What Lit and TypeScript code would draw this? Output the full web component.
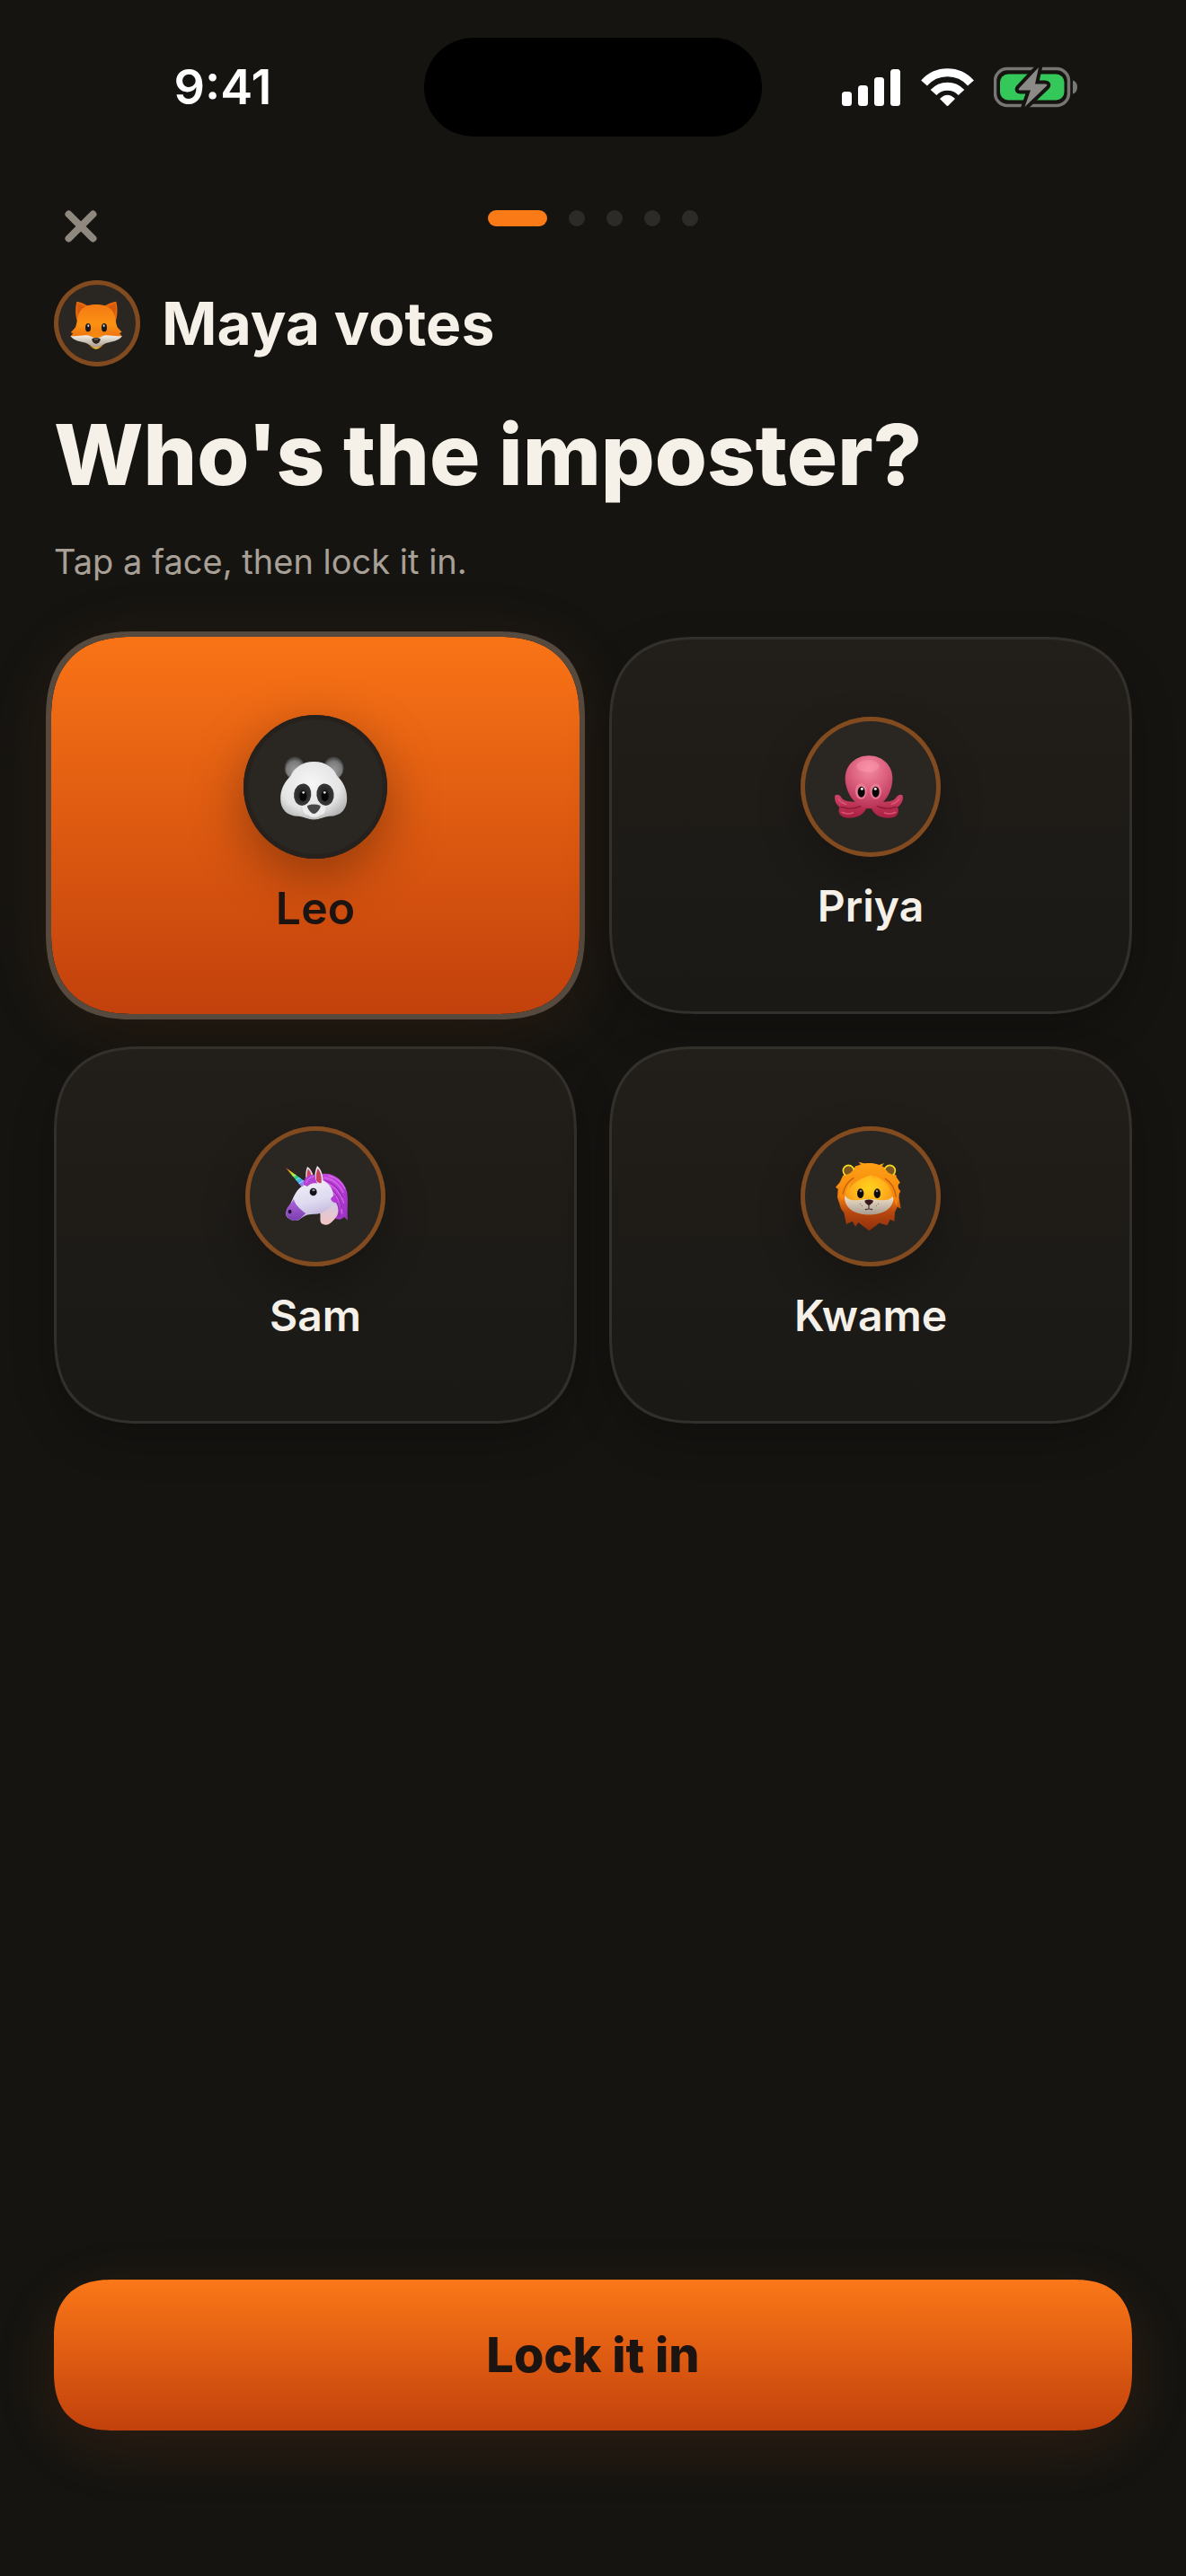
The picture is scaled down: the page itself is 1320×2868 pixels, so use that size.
import { LitElement, html, svg, css } from "lit";
import { customElement, property, state } from "lit/decorators.js";
import { classMap } from "lit/directives/class-map.js";

type Animal = "fox" | "panda" | "octopus" | "unicorn" | "lion";

interface Player {
  name: string;
  animal: Animal;
}

const PLAYERS: Player[] = [
  { name: "Leo", animal: "panda" },
  { name: "Priya", animal: "octopus" },
  { name: "Sam", animal: "unicorn" },
  { name: "Kwame", animal: "lion" },
];

const fox = html`<svg viewBox="30 36 288 288" aria-hidden="true">
  <defs>
    <linearGradient id="f1" x1="0" y1="0" x2="0" y2="1">
      <stop offset="0" stop-color="#f57a12" />
      <stop offset=".55" stop-color="#fb9113" />
      <stop offset="1" stop-color="#e9690f" />
    </linearGradient>
    <radialGradient id="f2" cx=".5" cy="1" r=".7">
      <stop offset="0" stop-color="#ffc62a" />
      <stop offset="1" stop-color="#ff9a14" stop-opacity="0" />
    </radialGradient>
    <linearGradient id="f3" x1="0" y1="0" x2="0" y2="1">
      <stop offset="0" stop-color="#f3ede4" />
      <stop offset="1" stop-color="#a79b8c" />
    </linearGradient>
  </defs>
  <path d="M106 107 C100 130 102 156 108 174 L150 126 C136 116 118 108 106 107Z" fill="#e5680f" />
  <path d="M238 107 C244 130 242 156 236 174 L192 126 C206 116 226 108 238 107Z" fill="#e5680f" />
  <path d="M110 113 C108 128 108 140 112 152 L138 126Z" fill="#d65a0d" />
  <path d="M235 113 C237 128 237 140 232 152 L206 126Z" fill="#d65a0d" />
  <path
    d="M171 117 C146 117 124 124 114 146 C106 166 108 182 100 196 L86 211 L94 213 L86 223 C100 232 140 244 171 236 C204 244 244 232 257 223 L249 213 L257 209 L244 196 C235 180 238 164 230 146 C220 124 196 117 171 117Z"
    fill="url(#f1)"
  />
  <ellipse cx="171" cy="214" rx="34" ry="52" fill="url(#f2)" />
  <path
    d="M85 222 C110 226 136 214 155 224 C162 229 182 229 189 224 C206 214 232 226 258 222 C250 236 228 240 214 244 C198 246 186 260 171 260 C156 260 146 247 130 244 C114 240 94 236 85 222Z"
    fill="url(#f3)"
  />
  <ellipse cx="144" cy="194" rx="9" ry="14" fill="#17191f" />
  <ellipse cx="198" cy="194" rx="9" ry="14" fill="#17191f" />
  <ellipse cx="145" cy="188" rx="3" ry="4" fill="#c9d4e0" />
  <ellipse cx="197" cy="188" rx="3" ry="4" fill="#c9d4e0" />
  <path d="M157 232 Q171 224 185 232 Q186 241 176 247 Q171 250 166 247 Q156 241 157 232Z" fill="#2b241f" />
  <ellipse cx="171" cy="233" rx="7" ry="2.500" fill="#6d635b" />
</svg>`;

const panda = html`<svg viewBox="62 45 482 482" aria-hidden="true">
  <defs>
    <radialGradient id="p1" cx=".45" cy=".38" r=".65">
      <stop offset="0" stop-color="#f6f6f6" />
      <stop offset=".7" stop-color="#e4e4e4" />
      <stop offset="1" stop-color="#b5b5b5" />
    </radialGradient>
    <radialGradient id="p2" cx=".5" cy=".6" r=".6">
      <stop offset="0" stop-color="#9a9a9a" />
      <stop offset=".7" stop-color="#7a7a7a" />
      <stop offset="1" stop-color="#3a3a3a" />
    </radialGradient>
    <radialGradient id="p3" cx=".5" cy=".5" r=".55">
      <stop offset="0" stop-color="#1c1c1c" />
      <stop offset="1" stop-color="#3c3c3c" />
    </radialGradient>
  </defs>
  <ellipse cx="234" cy="224" rx="33" ry="37" fill="url(#p2)" stroke="#4a4a4a" stroke-width="3" />
  <ellipse cx="364" cy="224" rx="33" ry="37" fill="url(#p2)" stroke="#4a4a4a" stroke-width="3" />
  <path
    d="M298 202 C340 202 366 226 376 250 C398 272 409 296 409 326 C409 362 388 384 350 385 C334 386 318 396 298 396 C278 396 262 386 246 385 C208 384 186 362 186 326 C186 296 198 272 220 250 C230 226 256 202 298 202Z"
    fill="url(#p1)"
  />
  <ellipse cx="260" cy="312" rx="29" ry="37" fill="url(#p3)" transform="rotate(8 260 312)" />
  <ellipse cx="336" cy="312" rx="29" ry="37" fill="url(#p3)" transform="rotate(-8 336 312)" />
  <ellipse cx="262" cy="317" rx="12" ry="18" fill="#070707" />
  <ellipse cx="335" cy="317" rx="12" ry="18" fill="#070707" />
  <circle cx="263" cy="305" r="4" fill="#e0e0e0" />
  <circle cx="334" cy="305" r="4" fill="#e0e0e0" />
  <path
    d="M257 352 C257 372 268 382 280 382 C284 392 314 392 318 382 C330 382 340 372 340 352"
    fill="#ececec"
    stroke="#c4c4c4"
    stroke-width="2"
  />
  <path d="M276 349 Q298 341 320 349 Q321 360 305 374 Q298 379 291 374 Q275 360 276 349Z" fill="#484848" />
</svg>`;

const octopus = html`<svg viewBox="63 57 468 468" aria-hidden="true">
  <defs>
    <radialGradient id="o1" cx=".5" cy=".25" r=".8">
      <stop offset="0" stop-color="#f48ba3" />
      <stop offset=".45" stop-color="#dd6280" />
      <stop offset="1" stop-color="#b52e54" />
    </radialGradient>
    <linearGradient id="o2" x1="0" y1="0" x2="0" y2="1">
      <stop offset="0" stop-color="#cf4467" />
      <stop offset="1" stop-color="#a81f42" />
    </linearGradient>
  </defs>
  <path
    d="M178 320 C186 314 196 320 201 329 C212 340 226 340 244 341 L338 341 C356 340 370 340 380 329 C386 319 396 313 404 320 C408 336 396 354 386 359 C394 368 390 388 370 394 C340 399 312 390 300 364 L282 364 C270 390 240 399 212 394 C192 388 186 372 194 359 C184 352 174 336 178 320Z"
    fill="url(#o2)"
  />
  <path
    d="M196 360 C206 356 214 366 236 363 C252 362 262 356 270 352 M386 360 C376 356 368 366 346 363 C330 362 320 356 312 352"
    fill="none"
    stroke="#8f1a39"
    stroke-width="4"
  />
  <path
    d="M202 376 C212 382 226 382 238 378 M380 376 C370 382 356 382 344 378 M190 332 C196 342 204 346 214 349 M392 332 C386 342 378 346 368 349"
    fill="none"
    stroke="#da5474"
    stroke-width="5"
    stroke-linecap="round"
  />
  <path
    d="M291 187 C336 187 370 220 370 262 C370 304 346 361 291 361 C240 361 212 304 212 262 C212 220 246 187 291 187Z"
    fill="url(#o1)"
  />
  <ellipse cx="288" cy="222" rx="38" ry="20" fill="#ff9db2" opacity=".4" />
  <ellipse cx="265" cy="306" rx="19" ry="26" fill="#ea7b95" />
  <ellipse cx="314" cy="306" rx="19" ry="26" fill="#ea7b95" />
  <ellipse cx="266" cy="308" rx="12" ry="18" fill="#080406" />
  <ellipse cx="314" cy="308" rx="12" ry="18" fill="#080406" />
  <circle cx="268" cy="298" r="4.500" fill="#f6f0ee" />
  <circle cx="313" cy="298" r="4.500" fill="#f6f0ee" />
</svg>`;

const unicorn = html`<svg viewBox="69 75 468 468" aria-hidden="true">
  <defs>
    <linearGradient id="u1" x1="0" y1="0" x2="1" y2="1">
      <stop offset="0" stop-color="#e0203c" />
      <stop offset=".18" stop-color="#f5a01e" />
      <stop offset=".36" stop-color="#b8e62a" />
      <stop offset=".52" stop-color="#27d07c" />
      <stop offset=".68" stop-color="#38b6f0" />
      <stop offset=".85" stop-color="#9a7bf5" />
      <stop offset="1" stop-color="#d9c8ff" />
    </linearGradient>
    <linearGradient id="u2" x1="0" y1="0" x2=".3" y2="1">
      <stop offset="0" stop-color="#f6f2fa" />
      <stop offset=".65" stop-color="#dedaf0" />
      <stop offset="1" stop-color="#c4b8dc" />
    </linearGradient>
    <linearGradient id="u3" x1="0" y1="0" x2="1" y2="1">
      <stop offset="0" stop-color="#c548dc" />
      <stop offset=".5" stop-color="#b63bd6" />
      <stop offset="1" stop-color="#9a32c0" />
    </linearGradient>
    <linearGradient id="u4" x1="0" y1="0" x2="0" y2="1">
      <stop offset="0" stop-color="#cfcbe6" />
      <stop offset="1" stop-color="#f3c3c2" />
    </linearGradient>
    <linearGradient id="u5" x1="0" y1="0" x2="0" y2="1">
      <stop offset="0" stop-color="#b164dc" />
      <stop offset="1" stop-color="#7a3fae" />
    </linearGradient>
  </defs>
  <path
    d="M326 234 C362 228 398 254 408 292 C414 324 408 352 411 389 L400 378 L386 386 L370 384 C380 362 372 338 354 318 L322 262Z"
    fill="url(#u3)"
  />
  <path
    d="M334 246 C362 252 384 268 396 296 M340 264 C366 276 388 300 398 330 M352 290 C376 304 388 332 392 366 M348 240 C372 246 390 258 402 284"
    fill="none"
    stroke="#d668e8"
    stroke-width="4"
    stroke-linecap="round"
  />
  <path
    d="M336 256 C362 264 384 286 394 312 M346 278 C372 292 386 318 390 350 M358 306 C374 320 382 346 382 376"
    fill="none"
    stroke="#8527ab"
    stroke-width="3"
    stroke-linecap="round"
  />
  <path d="M318 362 C322 376 316 392 324 400 C338 410 352 402 366 386 C384 368 384 344 366 322Z" fill="url(#u4)" />
  <path
    d="M262 274 C274 256 302 246 324 254 C350 262 368 290 362 318 C356 350 330 368 300 368 C276 367 262 376 250 386 C236 394 214 388 206 374 C202 360 212 348 220 334 C230 312 240 284 262 274Z"
    fill="url(#u2)"
  />
  <path
    d="M354 318 C360 308 368 304 374 306 C366 316 370 324 378 330 C368 332 358 328 354 318Z"
    fill="#b63bd6"
  />
  <path
    d="M230 318 C224 334 204 344 205 364 C206 386 226 392 240 389 C254 386 260 374 271 366 C258 356 238 342 230 318Z"
    fill="url(#u5)"
  />
  <ellipse cx="218" cy="360" rx="5.500" ry="7" fill="#1b0b26" />
  <path d="M203 212 L272 262 C270 270 264 276 256 276Z" fill="url(#u1)" />
  <path d="M226 240 L238 237 M238 254 L252 247 M248 266 L264 256" stroke="#ffffff" stroke-opacity=".5" stroke-width="3" />
  <path d="M276 210 C286 216 294 228 296 244 L272 256 C270 238 270 224 276 210Z" fill="#e9dff0" />
  <path d="M278 217 C285 223 290 234 291 246 L275 252 C274 238 275 226 278 217Z" fill="#c8495f" />
  <path d="M309 207 C322 218 330 236 328 266 C318 272 308 266 302 258 C300 238 302 222 309 207Z" fill="#efe6f4" />
  <path d="M311 216 C320 226 325 242 323 264 C316 266 310 262 306 256 C304 240 306 226 311 216Z" fill="#c4425c" />
  <path
    d="M264 270 C262 250 276 236 300 236 C304 246 304 258 310 266 C296 262 284 268 276 276Z"
    fill="#b540d4"
  />
  <path d="M272 264 C276 252 286 244 298 242" fill="none" stroke="#df7cf0" stroke-width="3" />
  <ellipse cx="296" cy="294" rx="12" ry="13" fill="#141118" />
  <ellipse cx="297" cy="288" rx="5" ry="4" fill="#8f8f98" />
</svg>`;

const lion = html`<svg viewBox="63 75 468 468" aria-hidden="true">
  <defs>
    <linearGradient id="l1" x1="0" y1="0" x2="0" y2="1">
      <stop offset="0" stop-color="#ff9c12" />
      <stop offset=".5" stop-color="#ee7a10" />
      <stop offset=".72" stop-color="#b8480f" />
      <stop offset="1" stop-color="#8f2f0c" />
    </linearGradient>
    <radialGradient id="l2" cx=".5" cy=".35" r=".65">
      <stop offset="0" stop-color="#ffd21c" />
      <stop offset=".55" stop-color="#ffb01a" />
      <stop offset="1" stop-color="#f58518" />
    </radialGradient>
    <linearGradient id="l3" x1="0" y1="0" x2="0" y2="1">
      <stop offset="0" stop-color="#f5e4cc" />
      <stop offset="1" stop-color="#a69c90" />
    </linearGradient>
    <linearGradient id="l4" x1="0" y1="0" x2="0" y2="1">
      <stop offset="0" stop-color="#ffa314" />
      <stop offset="1" stop-color="#f07c0c" />
    </linearGradient>
  </defs>
  <path
    d="M230 222 C250 204 272 198 292 198 C314 198 338 206 356 222 L384 240 L380 250 L392 266 L386 276 L397 292 L390 304 L398 350 L386 344 L378 362 L376 392 L362 386 L352 406 L326 398 L292 424 L256 396 L246 410 L236 392 L216 402 L208 364 L198 350 L186 312 L188 284 L180 278 L194 262 L204 240Z"
    fill="url(#l1)"
  />
  <circle cx="223" cy="223" r="18" fill="#7d5620" stroke="#f4dc22" stroke-width="5" />
  <circle cx="361" cy="223" r="18" fill="#7d5620" stroke="#f4dc22" stroke-width="5" />
  <path
    d="M292 232 C340 232 366 262 372 300 C382 340 344 370 292 370 C240 370 202 340 212 300 C218 262 244 232 292 232Z"
    fill="url(#l2)"
  />
  <path
    d="M210 306 C232 334 266 316 292 318 C318 316 352 334 374 306 C376 350 338 370 292 370 C246 370 208 350 210 306Z"
    fill="url(#l3)"
  />
  <path
    d="M306 240 C330 248 356 262 366 292 C370 310 378 330 384 342 L392 306 L388 268 L396 264 L384 246 C374 236 366 236 354 228 C350 220 342 214 332 212 L342 198 L318 206 C306 197 296 196 282 200 L256 194 L268 206 L244 208 L252 214 C240 216 236 226 228 232 C214 236 206 244 204 252 L182 282 L198 276 L190 304 L204 322 C210 300 218 276 230 262 L226 284 C246 256 276 244 300 238 L314 252Z"
    fill="url(#l4)"
  />
  <path
    d="M204 300 C210 276 222 258 240 248 M382 310 C378 284 366 262 346 250"
    fill="none"
    stroke="#c95f0a"
    stroke-width="4"
    stroke-linecap="round"
  />
  <ellipse cx="263" cy="299" rx="11" ry="16" fill="#0d0a0a" />
  <ellipse cx="319" cy="299" rx="11" ry="16" fill="#0d0a0a" />
  <ellipse cx="264" cy="291" rx="4" ry="4" fill="#8e8478" />
  <ellipse cx="318" cy="291" rx="4" ry="4" fill="#8e8478" />
  <path d="M277 323 Q291 316 306 323 Q306 330 296 337 Q291 341 286 337 Q276 330 277 323Z" fill="#38181c" />
  <path d="M291 338 V351 M280 353 Q291 349 302 353" fill="none" stroke="#46302a" stroke-width="3.500" stroke-linecap="round" />
  <g fill="#5f4f44">
    <circle cx="262" cy="334" r="1.500" />
    <circle cx="268" cy="340" r="1.500" />
    <circle cx="316" cy="340" r="1.500" />
    <circle cx="322" cy="334" r="1.500" />
  </g>
</svg>`;

const DRAWINGS = { fox, panda, octopus, unicorn, lion };

/** Round portrait with an accent ring. */
@customElement("player-avatar")
export class PlayerAvatar extends LitElement {
  @property() animal: Animal = "fox";

  static styles = css`
    :host {
      display: block;
      border-radius: 50%;
      background: #2a2621;
      box-shadow: inset 0 0 0 5px #824a1f;
    }
    svg {
      display: block;
      width: 100%;
      height: 100%;
    }
  `;

  render() {
    return DRAWINGS[this.animal];
  }
}

/** Clock, camera cut-out and the signal, wifi and battery marks. */
@customElement("status-bar")
export class StatusBar extends LitElement {
  static styles = css`
    :host {
      display: grid;
      grid-template-columns: 1fr 376px 1fr;
      align-items: center;
      padding-top: 42px;
    }
    .time {
      padding-left: 24px;
      text-align: center;
      color: #fff;
      font-size: 54px;
      line-height: 64px;
      font-weight: 600;
    }
    .island {
      height: 110px;
      border-radius: 55px;
      background: #000;
    }
    .marks {
      display: flex;
      justify-content: center;
      align-items: center;
      gap: 22px;
      padding-right: 32px;
    }
    svg {
      display: block;
    }
  `;

  render() {
    return html`
      <div class="time">9:41</div>
      <div class="island"></div>
      <div class="marks">
        <svg width="66" height="42" viewBox="0 0 66 42" fill="#fff" role="img" aria-label="Signal">
          ${[16, 23, 32, 41].map((h, i) => svg`<rect x=${i * 18} y=${42 - h} width="11" height=${h} rx="3.500" />`)}
        </svg>
        <svg width="59" height="44" viewBox="0 0 59 44" role="img" aria-label="Wi-Fi">
          <g fill="none" stroke="#fff" stroke-width="9">
            <path d="M3.500 17.500 A34.500 34.500 0 0 1 55.500 17.500" />
            <path d="M14 28 A21 21 0 0 1 45 28" />
          </g>
          <path d="M21 35 Q29.500 26.500 38 35 L30.500 42.500 Q29.500 43.500 28.500 42.500Z" fill="#fff" />
        </svg>
        <svg width="93" height="48" viewBox="0 0 93 48" role="img" aria-label="Battery charging">
          <rect x="1.500" y="3.500" width="82" height="41" rx="13.500" fill="none" stroke="#787673" stroke-width="3.500" />
          <path d="M88 16.500 C91.500 17.500 93 20.500 93 24 C93 27.500 91.500 30.500 88 31.500Z" fill="#787673" />
          <rect x="7" y="9.500" width="71.500" height="29" rx="9" fill="#34c759" />
          <path
            d="M50 2 L28 25.500 Q27 27.500 29.500 27.500 L41 27.500 L34.500 46 L59 22.500 Q60 20.500 57 20.500 L46 20.500Z"
            fill="#151411"
            stroke="#151411"
            stroke-width="8"
            stroke-linejoin="round"
          />
          <path
            d="M50 2 L28 25.500 Q27 27.500 29.500 27.500 L41 27.500 L34.500 46 L59 22.500 Q60 20.500 57 20.500 L46 20.500Z"
            fill="#8c8a87"
          />
        </svg>
      </div>
    `;
  }
}

@customElement("app-root")
export class AppRoot extends LitElement {
  @state() private chosen = "Leo";

  static styles = css`
    :host {
      display: flex;
      flex-direction: column;
      box-sizing: border-box;
      min-height: 100vh;
      padding-bottom: 162px;
      background: #151411;
      color: #f5f0e8;
      font-family: Inter, "Liberation Sans", sans-serif;
    }
    button {
      font: inherit;
      color: inherit;
      border: 0;
      padding: 0;
      cursor: pointer;
    }
    main {
      flex: 1;
      display: flex;
      flex-direction: column;
      padding: 70px 60px 0;
    }
    .nav {
      display: grid;
      grid-template-columns: 60px 1fr 60px;
      align-items: start;
    }
    .close {
      display: grid;
      place-items: center;
      height: 60px;
      background: none;
    }
    .steps {
      display: flex;
      justify-content: center;
      gap: 24px;
      margin: 0;
      padding: 12px 0 0;
      list-style: none;
    }
    .step {
      width: 18px;
      height: 18px;
      border-radius: 9px;
      background: #2d2b27;
    }
    .step.current {
      width: 66px;
      background: #f97a17;
    }
    .voter {
      display: flex;
      align-items: center;
      gap: 24px;
      margin: 30px 0 0;
      font-size: 66px;
      line-height: 84px;
      font-weight: 700;
    }
    .voter player-avatar {
      width: 96px;
      height: 96px;
    }
    h1 {
      margin: 38px 0 0;
      font-size: 94px;
      line-height: 120px;
      font-weight: 800;
    }
    .hint {
      margin: 35px 0 0;
      color: #a8a096;
      font-size: 38px;
      line-height: 48px;
    }
    .players {
      display: grid;
      grid-template-columns: 1fr 1fr;
      grid-auto-rows: minmax(420px, auto);
      gap: 36px;
      margin-top: 60px;
    }
    .card {
      display: flex;
      flex-direction: column;
      align-items: center;
      justify-content: center;
      gap: 24px;
      border: 3px solid #33302c;
      border-radius: 84px;
      background: linear-gradient(#221e1a, #1a1915);
      box-shadow: 0 18px 48px rgba(0, 0, 0, 0.22);
      font-size: 48px;
      line-height: 62px;
      font-weight: 600;
    }
    .card player-avatar {
      width: 156px;
      height: 156px;
      box-shadow:
        inset 0 0 0 5px #824a1f,
        0 18px 48px rgba(0, 0, 0, 0.25);
    }
    .card.chosen {
      margin: -6px -9px;
      border: 6px solid #564a3f;
      background: linear-gradient(#f97316, #c2410c) padding-box;
      box-shadow: 0 12px 84px rgba(249, 115, 22, 0.08);
      color: #1c1410;
      font-size: 50px;
    }
    .card.chosen player-avatar {
      width: 160px;
      height: 160px;
      box-shadow:
        inset 0 0 0 5px #26211d,
        0 18px 60px rgba(0, 0, 0, 0.34);
    }
    .lock {
      height: 168px;
      margin: 0 60px;
      border-radius: 60px;
      background: linear-gradient(#fb7718, #c2410c);
      box-shadow: 0 18px 72px rgba(249, 115, 22, 0.11);
      color: #1c1410;
      font-size: 54px;
      line-height: 60px;
      font-weight: 800;
    }
    @supports (corner-shape: superellipse(1.3)) {
      .card {
        border-radius: 98px;
        corner-shape: superellipse(1.3);
      }
      .lock {
        border-radius: 66px;
        corner-shape: superellipse(1.3);
      }
    }
  `;

  render() {
    return html`
      <status-bar></status-bar>
      <main>
        <div class="nav">
          <button class="close" aria-label="Close">
            <svg width="36" height="36" viewBox="0 0 36 36" aria-hidden="true">
              <path d="M4.500 4.500 L31.500 31.500 M31.500 4.500 L4.500 31.500" stroke="#8f887f" stroke-width="8" stroke-linecap="round" />
            </svg>
          </button>
          <ol class="steps" aria-label="Voting progress">
            ${[0, 1, 2, 3, 4].map((i) => html`<li class=${classMap({ step: true, current: i === 0 })}></li>`)}
          </ol>
        </div>
        <p class="voter"><player-avatar animal="fox"></player-avatar>Maya votes</p>
        <h1>Who's the imposter?</h1>
        <p class="hint">Tap a face, then lock it in.</p>
        <div class="players">
          ${PLAYERS.map(
            (p) => html`<button
              class=${classMap({ card: true, chosen: p.name === this.chosen })}
              aria-pressed=${p.name === this.chosen ? "true" : "false"}
              @click=${() => (this.chosen = p.name)}
            >
              <player-avatar animal=${p.animal}></player-avatar>
              <span>${p.name}</span>
            </button>`,
          )}
        </div>
      </main>
      <button class="lock">Lock it in</button>
    `;
  }
}
